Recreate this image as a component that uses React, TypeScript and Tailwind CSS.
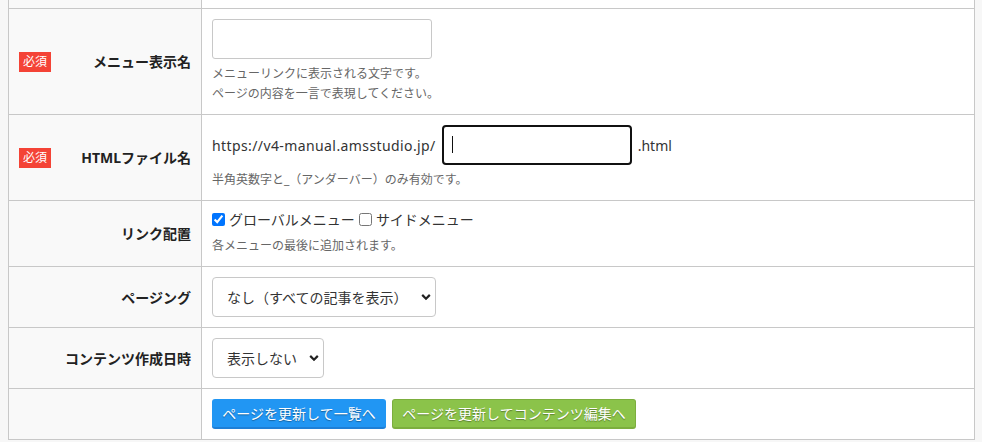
import React from "react";

const FONT = {
  fontFamily:
    '"Noto Sans", "Noto Sans CJK JP", "Liberation Sans", sans-serif',
};

function Badge() {
  return (
    <span className="inline-flex h-[20px] w-[32px] items-center justify-center bg-[#f44336] text-[12px] leading-none text-white">
      必須
    </span>
  );
}

function Th({ label, required }: { label: string; required?: boolean }) {
  return (
    <div className="flex w-[193px] shrink-0 items-center border-r border-[#c8c8c8] bg-[#f9f9f9] pl-[10px] pr-[10px]">
      {required ? <Badge /> : null}
      <span className="ml-auto text-[14px] font-bold text-[#222]">{label}</span>
    </div>
  );
}

function Help({ children }: { children: React.ReactNode }) {
  return <p className="text-[12px] leading-[20px] text-[#666]">{children}</p>;
}

function Chevron() {
  return (
    <svg
      width="10"
      height="7"
      viewBox="0 0 10 7"
      className="pointer-events-none absolute top-1/2 -translate-y-1/2"
      style={{ right: 5 }}
    >
      <path d="M1.2 1.4 L5 5.2 L8.8 1.4" fill="none" stroke="#222" strokeWidth="2.2" />
    </svg>
  );
}

export default function App() {
  return (
    <div className="min-h-screen bg-[#f7f7f7] pl-[8px] pr-[7px]" style={FONT}>
      <div className="border-x border-b border-[#c8c8c8] bg-white text-[#333]">
        {/* partial top row */}
        <div className="flex h-[8px]">
          <div className="w-[193px] shrink-0 border-r border-[#c8c8c8] bg-[#f9f9f9]" />
          <div className="flex-1" />
        </div>

        {/* メニュー表示名 */}
        <div className="flex h-[106px] border-t border-[#c8c8c8]">
          <Th label="メニュー表示名" required />
          <div className="flex-1 px-[10px] pt-[10px]">
            <input
              type="text"
              className="block h-[40px] w-[220px] rounded-[3px] border border-[#c8c8c8] bg-white outline-none"
            />
            <div className="mt-[5px]">
              <Help>メニューリンクに表示される文字です。</Help>
              <Help>ページの内容を一言で表現してください。</Help>
            </div>
          </div>
        </div>

        {/* HTMLファイル名 */}
        <div className="flex h-[86px] border-t border-[#c8c8c8]">
          <Th label="HTMLファイル名" required />
          <div className="flex-1 px-[10px] pt-[10px]">
            <div className="flex items-center text-[14px]">
              <span className="tracking-[0.4px]">https://v4-manual.amsstudio.jp/</span>
              <div className="relative ml-[6px]">
                <input
                  type="text"
                  className="block h-[40px] w-[190px] rounded-[4px] border-2 border-[#111] bg-white outline-none"
                />
                <span className="pointer-events-none absolute left-[10px] top-[11px] h-[17px] w-px bg-[#111]" />
              </div>
              <span className="ml-[6px]">.html</span>
            </div>
            <div className="mt-[5px]">
              <Help>半角英数字と_（アンダーバー）のみ有効です。</Help>
            </div>
          </div>
        </div>

        {/* リンク配置 */}
        <div className="flex h-[66px] border-t border-[#c8c8c8]">
          <Th label="リンク配置" />
          <div className="flex-1 px-[10px] pt-[7px]">
            <div className="flex h-[22px] items-center text-[14px]">
              <label className="flex items-center">
                <input
                  type="checkbox"
                  defaultChecked
                  className="m-0 h-[13px] w-[13px] accent-[#0075ff]"
                />
                <span className="ml-[4px]">グローバルメニュー</span>
              </label>
              <label className="ml-[4px] flex items-center">
                <input type="checkbox" className="m-0 h-[13px] w-[13px]" />
                <span className="ml-[4px]">サイドメニュー</span>
              </label>
            </div>
            <div className="mt-[6px]">
              <Help>各メニューの最後に追加されます。</Help>
            </div>
          </div>
        </div>

        {/* ページング */}
        <div className="flex h-[61px] border-t border-[#c8c8c8]">
          <Th label="ページング" />
          <div className="flex-1 px-[10px] pt-[10px]">
            <div className="relative w-[224px]">
              <select
                defaultValue="none"
                className="block h-[40px] w-full appearance-none rounded-[4px] border border-[#c8c8c8] bg-white pl-[14px] text-[14px] text-[#333] outline-none"
              >
                <option value="none">なし（すべての記事を表示）</option>
              </select>
              <Chevron />
            </div>
          </div>
        </div>

        {/* コンテンツ作成日時 */}
        <div className="flex h-[61px] border-t border-[#c8c8c8]">
          <Th label="コンテンツ作成日時" />
          <div className="flex-1 px-[10px] pt-[10px]">
            <div className="relative w-[112px]">
              <select
                defaultValue="hide"
                className="block h-[40px] w-full appearance-none rounded-[4px] border border-[#c8c8c8] bg-white pl-[14px] text-[14px] text-[#333] outline-none"
              >
                <option value="hide">表示しない</option>
              </select>
              <Chevron />
            </div>
          </div>
        </div>

        {/* buttons */}
        <div className="flex h-[51px] border-t border-[#c8c8c8]">
          <div className="w-[193px] shrink-0 border-r border-[#c8c8c8] bg-[#f9f9f9]" />
          <div className="flex flex-1 gap-[6px] px-[10px] pt-[10px]">
            <button
              type="button"
              className="h-[30px] w-[174px] rounded-[3px] border-b-2 border-[#1e7fd6] bg-[#2196f3] text-[14px] text-white"
              style={{ textShadow: "0 1px 1px rgba(0,0,0,0.35)" }}
            >
              ページを更新して一覧へ
            </button>
            <button
              type="button"
              className="h-[30px] w-[244px] rounded-[3px] border border-b-2 border-[#7cae3e] bg-[#8bc34a] text-[14px] text-white"
              style={{ textShadow: "0 1px 1px rgba(0,0,0,0.35)" }}
            >
              ページを更新してコンテンツ編集へ
            </button>
          </div>
        </div>
      </div>
    </div>
  );
}
